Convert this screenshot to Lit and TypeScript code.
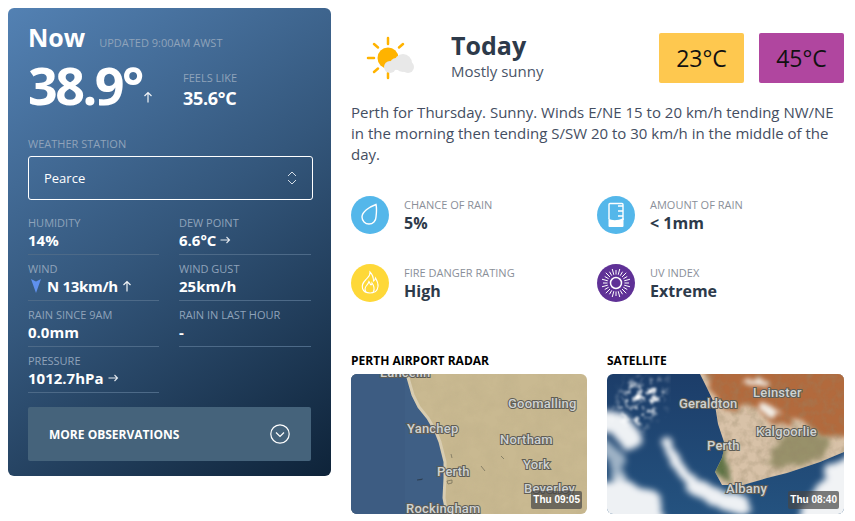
import { LitElement, html, svg, css } from "lit";
import { customElement } from "lit/decorators.js";

const arrowRight = html`<svg class="arrow" width="11" height="10" viewBox="0 0 11 10">
  <path d="M0.5 5h9M6.5 2l3 3-3 3" fill="none" stroke="#e4e9ef" stroke-width="1.1" />
</svg>`;

const arrowUp = html`<svg class="arrow" width="10" height="12" viewBox="0 0 10 12">
  <path d="M5 11.5V1.5M1.5 5L5 1.5 8.5 5" fill="none" stroke="#f0f3f6" stroke-width="1.2" />
</svg>`;

const sunRays = () => {
  const rays = [];
  for (let i = 0; i < 24; i++) {
    const a = (i * Math.PI) / 12;
    const r2 = i % 2 ? 14.5 : 13;
    rays.push(
      svg`<line x1=${19 + Math.cos(a) * 8.5} y1=${19 + Math.sin(a) * 8.5} x2=${19 + Math.cos(a) * r2} y2=${19 + Math.sin(a) * r2} />`
    );
  }
  return rays;
};

const dropIcon = html`<svg width="38" height="38" viewBox="0 0 38 38">
  <circle cx="19" cy="19" r="19" fill="#54b7ea" />
  <path d="M25 8.5C26 13 25.5 17 25 21a7 7 0 0 1-14 0C11 16 18 11 25 8.5z" fill="none" stroke="#fff" stroke-width="1.4" />
</svg>`;

const gaugeIcon = html`<svg width="38" height="38" viewBox="0 0 38 38">
  <circle cx="19" cy="19" r="19" fill="#54b7ea" />
  <path d="M12 23V8.5a1 1 0 0 1 1-1h12a1 1 0 0 1 1 1V24" fill="none" stroke="#fff" stroke-width="1.4" />
  <path d="M11.5 22.5c4 2.5 9 2.2 15-.5v8a1 1 0 0 1-1 1h-13a1 1 0 0 1-1-1z" fill="#fff" />
  <path d="M21 10h5M21 15h5M21 20h5" stroke="#fff" stroke-width="1.6" />
</svg>`;

const fireIcon = html`<svg width="38" height="38" viewBox="0 0 38 38">
  <circle cx="19" cy="19" r="19" fill="#fed838" />
  <path d="M19 8c.6 3.5-2 5-4 7.500-3 3-4.500 6-3.500 9 1 3 4 4.500 7.500 4.500 4 0 7.500-2 8-6.500.3-3-1-6-2.500-8.500-.3 1.500-1 2.500-2 3 0-3.500-1.500-7-3.500-9z" fill="none" stroke="#fff" stroke-width="1.1" />
  <path d="M15 28c-1.500-2-1-4.500.5-6.500 1-1.500 2-2 2.500-4 1 1.500 1 3 2 3.500 1-.5 1-1.500 1-2 1.500 2 3 5 1.500 8.500-.5 1-1 1.500-2 1" fill="none" stroke="#fff" stroke-width="1.1" />
</svg>`;

const uvIcon = html`<svg width="38" height="38" viewBox="0 0 38 38">
  <circle cx="19" cy="19" r="19" fill="#5f3196" />
  <circle cx="19" cy="19" r="5.5" fill="none" stroke="#fff" stroke-width="1.5" />
  <g stroke="#fff" stroke-width="1">${sunRays()}</g>
</svg>`;

const stats = [
  { icon: dropIcon, label: "Chance of rain", value: "5%" },
  { icon: gaugeIcon, label: "Amount of rain", value: "< 1mm" },
  { icon: fireIcon, label: "Fire danger rating", value: "High" },
  { icon: uvIcon, label: "UV index", value: "Extreme" },
];

const radarMap = html`<svg class="map" viewBox="0 0 236 140" width="236" height="140">
  <defs>
    <filter id="mottle" x="0" y="0" width="100%" height="100%">
      <feTurbulence type="fractalNoise" baseFrequency="0.06" numOctaves="3" seed="4" />
      <feColorMatrix values="0 0 0 0 0.45  0 0 0 0 0.38  0 0 0 0 0.22  0.9 0 0 0 -0.3" />
    </filter>
  </defs>
  <rect width="236" height="140" fill="#c9b991" />
  <rect width="236" height="140" filter="url(#mottle)" opacity="0.45" />
  <path d="M56 0L62 21 68 33 77 44 85 58 89 68 94 88 94 104 93 124 96 140H0V0z" fill="#3f5f85" />
  <path d="M56 0L62 21 68 33 77 44 85 58 89 68 94 88 94 104 93 124 96 140" fill="none" stroke="#d8ccb0" stroke-width="3" />
  <rect width="54" height="140" fill="#3d5c82" />
  <path d="M66 105.5l6-1-1 1.5-5 .5z" fill="#2d3f52" />
  <path d="M96 107l5-1v3l-4 1zM100 80l1 4M130 92l4 5M150 82l3 3" fill="none" stroke="#6e6a55" stroke-width="1" opacity="0.7" />
  <g class="map-labels">
    <text x="29" y="3">Lancelin</text>
    <text x="157" y="34">Goomalling</text>
    <text x="56" y="59">Yanchep</text>
    <text x="149" y="70">Northam</text>
    <text x="172" y="95">York</text>
    <text x="86" y="102">Perth</text>
    <text x="173" y="119">Beverley</text>
    <text x="55" y="139">Rockingham</text>
  </g>
</svg>`;

const satelliteMap = html`<svg class="map" viewBox="0 0 237 140" width="237" height="140">
  <defs>
    <filter id="rough" x="-20%" y="-20%" width="140%" height="140%">
      <feTurbulence type="fractalNoise" baseFrequency="0.08" numOctaves="3" seed="7" result="n" />
      <feDisplacementMap in="SourceGraphic" in2="n" scale="16" />
      <feGaussianBlur stdDeviation="2.500" />
    </filter>
    <filter id="cloud" x="-30%" y="-30%" width="160%" height="160%">
      <feTurbulence type="fractalNoise" baseFrequency="0.04 0.1" numOctaves="4" seed="11" result="n" />
      <feDisplacementMap in="SourceGraphic" in2="n" scale="14" />
      <feGaussianBlur stdDeviation="3" />
    </filter>
    <filter id="specks" x="0" y="0" width="100%" height="100%">
      <feTurbulence type="fractalNoise" baseFrequency="0.14" numOctaves="3" seed="3" />
      <feColorMatrix values="0 0 0 0 1  0 0 0 0 1  0 0 0 0 1  4 0 0 0 -1.900" />
      <feGaussianBlur stdDeviation="1" />
    </filter>
    <filter id="grain" x="0" y="0" width="100%" height="100%">
      <feTurbulence type="fractalNoise" baseFrequency="0.12" numOctaves="3" seed="9" />
      <feColorMatrix values="0 0 0 0 0.3  0 0 0 0 0.24  0 0 0 0 0.14  2 0 0 0 -0.8" />
    </filter>
    <filter id="fade"><feGaussianBlur stdDeviation="6" /></filter>
    <mask id="speck-area"><path d="M6 44L22 8 58 4 56 30 30 56z" fill="#fff" filter="url(#fade)" /></mask>
    <clipPath id="land">
      <path d="M93 0L100 14 108 31 111 50 118 71 115 84 108 98 115 111 136 111 160 104 180 99 213 88 237 78V0z" />
    </clipPath>
    <linearGradient id="sea" x1="0" y1="0" x2="0" y2="1">
      <stop offset="0" stop-color="#1c3d69" />
      <stop offset="1" stop-color="#24527f" />
    </linearGradient>
  </defs>
  <rect width="237" height="140" fill="url(#sea)" />
  <g clip-path="url(#land)">
    <rect width="237" height="140" fill="#d8c2a8" />
    <path d="M96 -8H248V62L214 64 195 46 165 50 150 34 118 36 106 18z" fill="#b26a3d" filter="url(#rough)" />
    <path d="M160 92l8-26 28-8 28 6-8 20-30 10z" fill="#98916a" filter="url(#rough)" />
    <path d="M108 72l11-1-1 14 5 22-15-8-4-10z" fill="#5f7344" filter="url(#rough)" />
    <rect width="237" height="140" filter="url(#grain)" opacity="0.4" />
  </g>
  <path d="M132 5l26 1 6 5-22 0zM152 38l8-6 16 8-10 2z" fill="#f3eee6" filter="url(#rough)" />
  <g fill="none" stroke="#eef1f4" stroke-linecap="round" filter="url(#cloud)">
    <path d="M-4 46L14 52 24 66" stroke-width="22" />
    <path d="M-4 72L10 84 12 104" stroke-width="14" stroke="#9fb3c6" />
    <path d="M62 70C66 84 72 98 88 110" stroke-width="10" />
    <path d="M88 112C104 122 118 127 134 131" stroke-width="18" />
  </g>
  <path d="M-12 108L14 104 52 120 58 152H-12z" fill="#eef1f4" filter="url(#cloud)" />
  <path d="M222 92L248 78V152H186L204 122z" fill="#f1f3f5" filter="url(#cloud)" />
  <rect width="237" height="140" filter="url(#specks)" mask="url(#speck-area)" />
  <g class="map-labels">
    <text x="146" y="23">Leinster</text>
    <text x="72" y="34">Geraldton</text>
    <text x="149" y="62">Kalgoorlie</text>
    <text x="100" y="76">Perth</text>
    <text x="119" y="119">Albany</text>
  </g>
</svg>`;

@customElement("app-root")
export class AppRoot extends LitElement {
  static styles = css`
    :host {
      display: flex;
      align-items: flex-start;
      width: 855px;
      height: 521px;
      overflow: hidden;
      box-sizing: border-box;
      padding: 8px 11px 0 8px;
      gap: 20px;
      font-family: "Open Sans", sans-serif;
      color: #2d3a4a;
      background: #fff;
    }

    .now {
      width: 323px;
      height: 468px;
      flex: none;
      box-sizing: border-box;
      padding: 13px 20px 0;
      border-radius: 6px;
      color: #fff;
      background: linear-gradient(145deg, #5381b3 0%, #34577c 48%, #0e2339 100%);
    }

    .now-head {
      display: flex;
      align-items: baseline;
      gap: 14px;
    }

    .now-head b {
      font-size: 25px;
      line-height: 32px;
    }

    .muted {
      font-size: 11px;
      line-height: 14px;
      color: #8fa3ba;
      text-transform: uppercase;
    }

    .temps {
      display: flex;
      height: 61px;
      margin-top: 2px;
    }

    .temp {
      width: 114px;
      flex: none;
      font-size: 52px;
      line-height: 60px;
      font-weight: 700;
      letter-spacing: -2.5px;
      white-space: nowrap;
    }

    .temp-arrow {
      align-self: flex-end;
      margin: 0 0 8px 1px;
      width: 10px;
    }

    .feels {
      margin: 10px 0 0 30px;
    }

    .feels b {
      display: block;
      font-size: 18px;
      line-height: 22px;
      letter-spacing: -0.3px;
    }

    .station {
      margin-top: 21px;
    }

    .select {
      display: flex;
      align-items: center;
      justify-content: space-between;
      box-sizing: border-box;
      width: 285px;
      height: 44px;
      margin-top: 5px;
      padding: 0 15px;
      border: 1px solid #fff;
      border-radius: 3px;
      font-size: 13px;
    }

    .obs {
      display: grid;
      grid-template-columns: 131px 132px;
      grid-auto-rows: 46px;
      column-gap: 20px;
      margin-top: 9px;
    }

    .obs > div {
      box-sizing: border-box;
      padding-top: 6px;
      border-bottom: 1px solid #4d6a88;
    }

    .obs .muted {
      display: block;
      line-height: 15px;
    }

    .obs b {
      display: flex;
      align-items: center;
      gap: 4px;
      font-size: 15px;
      line-height: 20px;
      white-space: nowrap;
    }

    .obs .wind {
      letter-spacing: -0.3px;
    }

    .more {
      display: flex;
      align-items: center;
      justify-content: space-between;
      width: 283px;
      height: 54px;
      margin-top: 14px;
      box-sizing: border-box;
      padding: 0 21px;
      border-radius: 2px;
      background: #45637b;
      font-size: 12px;
      font-weight: 700;
    }

    .right {
      width: 493px;
      flex: none;
    }

    .today {
      display: flex;
      align-items: center;
      height: 50px;
      margin-top: 25px;
    }

    .today-icon {
      width: 100px;
      flex: none;
      padding-left: 15px;
      box-sizing: border-box;
    }

    .today-icon svg {
      display: block;
    }

    .today h1 {
      margin: 0;
      font-size: 25px;
      line-height: 30px;
      font-weight: 700;
    }

    .today p {
      margin: 0;
      font-size: 15px;
      line-height: 22px;
      color: #4a5568;
    }

    .today-text {
      flex: 1;
      margin-top: -5px;
    }

    .box {
      display: flex;
      align-items: center;
      justify-content: center;
      width: 85px;
      height: 50px;
      margin-left: 15px;
      border-radius: 2px;
      font-size: 23px;
      color: #111;
    }

    .max {
      background: #fec84f;
    }

    .uv {
      background: #b0469f;
    }

    .summary {
      margin: 19px 0 0;
      font-size: 15px;
      line-height: 21px;
      color: #444e62;
    }

    .stats {
      display: grid;
      grid-template-columns: 246px 1fr;
      grid-auto-rows: 38px;
      row-gap: 30px;
      margin-top: 31px;
    }

    .stat {
      display: flex;
      align-items: center;
      gap: 15px;
    }

    .stat svg {
      display: block;
      flex: none;
    }

    .stat span {
      display: block;
      font-size: 11px;
      line-height: 15px;
      color: #8a8f99;
      text-transform: uppercase;
    }

    .stat b {
      display: block;
      font-size: 16px;
      line-height: 22px;
    }

    .maps {
      display: grid;
      grid-template-columns: 236px 237px;
      column-gap: 20px;
      margin-top: 51px;
    }

    .maps h2 {
      margin: 0 0 5px;
      font-size: 12px;
      line-height: 16px;
      font-weight: 700;
      color: #000;
      text-transform: uppercase;
    }

    .frame {
      position: relative;
      height: 140px;
      border-radius: 6px;
      overflow: hidden;
    }

    .map {
      display: block;
    }

    .map-labels {
      font-family: Roboto, sans-serif;
      font-size: 13px;
      font-weight: 500;
      fill: #cfd2d2;
      stroke: #5f5d55;
      stroke-width: 2px;
      paint-order: stroke;
      letter-spacing: 0.2px;
    }

    .stamp {
      position: absolute;
      right: 5px;
      bottom: 5px;
      padding: 0 2px;
      border-radius: 2px;
      background: rgba(70, 70, 70, 0.7);
      color: #fff;
      font-family: "Liberation Sans", sans-serif;
      font-size: 10px;
      font-weight: 700;
      line-height: 18px;
    }
  `;

  render() {
    return html`
      <section class="now">
        <div class="now-head">
          <b>Now</b>
          <span class="muted">Updated 9:00am AWST</span>
        </div>
        <div class="temps">
          <div class="temp">38.9°</div>
          <div class="temp-arrow">${arrowUp}</div>
          <div class="feels">
            <span class="muted">Feels like</span>
            <b>35.6°C</b>
          </div>
        </div>
        <div class="station muted">Weather station</div>
        <div class="select">
          Pearce
          <svg width="10" height="14" viewBox="0 0 10 14">
            <path d="M1 5l4-4 4 4M1 9l4 4 4-4" fill="none" stroke="#d5dde6" stroke-width="1" />
          </svg>
        </div>
        <div class="obs">
          <div><span class="muted">Humidity</span><b>14%</b></div>
          <div><span class="muted">Dew point</span><b>6.6°C ${arrowRight}</b></div>
          <div>
            <span class="muted">Wind</span>
            <b class="wind">
              <svg width="12" height="14" viewBox="0 0 12 14" style="margin:0 1px 0 2px">
                <path d="M1 0l5 2.5L11 0 6 14z" fill="#5f90ee" />
              </svg>
              N 13km/h ${arrowUp}
            </b>
          </div>
          <div><span class="muted">Wind gust</span><b>25km/h</b></div>
          <div><span class="muted">Rain since 9am</span><b>0.0mm</b></div>
          <div><span class="muted">Rain in last hour</span><b>-</b></div>
          <div><span class="muted">Pressure</span><b>1012.7hPa ${arrowRight}</b></div>
        </div>
        <div class="more">
          MORE OBSERVATIONS
          <svg width="20" height="20" viewBox="0 0 20 20">
            <circle cx="10" cy="10" r="9.2" fill="none" stroke="#fff" stroke-width="1.2" />
            <path d="M6 8.5l4 4 4-4" fill="none" stroke="#fff" stroke-width="1.2" />
          </svg>
        </div>
      </section>

      <section class="right">
        <div class="today">
          <div class="today-icon">
            <svg width="50" height="44" viewBox="0 0 50 44">
              <g stroke="#ffb300" stroke-width="2.5" stroke-linecap="round">
                <path d="M22 2v6M2 22h6M8 8l4 3.5M37 8l-4 3.5M8 36l4-3.5M22 37v5" />
              </g>
              <circle cx="22" cy="22" r="10.5" fill="#ffb300" />
              <g fill="#e8e8e8">
                <circle cx="24" cy="31" r="6" />
                <circle cx="30" cy="28" r="6" />
                <circle cx="37" cy="27" r="9" />
                <circle cx="42" cy="31" r="6" />
              </g>
            </svg>
          </div>
          <div class="today-text">
            <h1>Today</h1>
            <p>Mostly sunny</p>
          </div>
          <div class="box max">23°C</div>
          <div class="box uv">45°C</div>
        </div>
        <p class="summary">
          Perth for Thursday. Sunny. Winds E/NE 15 to 20 km/h tending NW/NE in the morning then
          tending S/SW 20 to 30 km/h in the middle of the day.
        </p>
        <div class="stats">
          ${stats.map(
            (s) => html`<div class="stat">
              ${s.icon}
              <div><span>${s.label}</span><b>${s.value}</b></div>
            </div>`
          )}
        </div>
        <div class="maps">
          <div>
            <h2>Perth Airport radar</h2>
            <div class="frame">${radarMap}<div class="stamp">Thu 09:05</div></div>
          </div>
          <div>
            <h2>Satellite</h2>
            <div class="frame">${satelliteMap}<div class="stamp">Thu 08:40</div></div>
          </div>
        </div>
      </section>
    `;
  }
}
